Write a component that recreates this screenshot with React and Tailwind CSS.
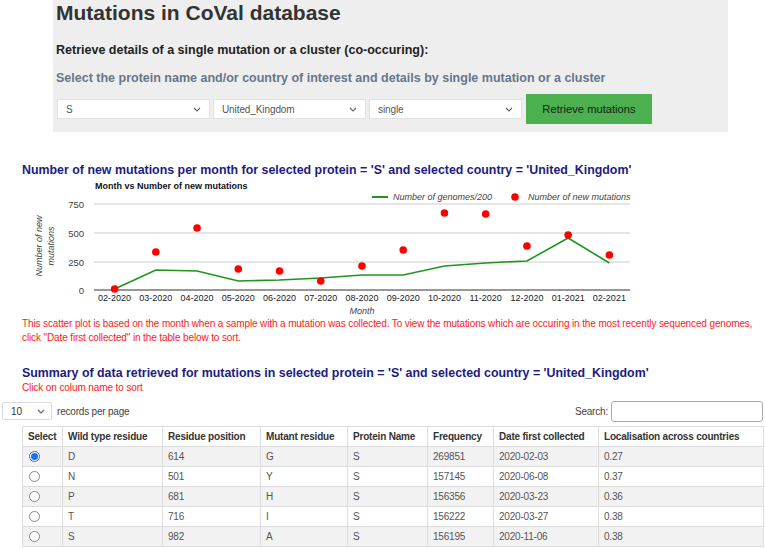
import React from 'react';

const months = ['02-2020', '03-2020', '04-2020', '05-2020', '06-2020', '07-2020', '08-2020', '09-2020', '10-2020', '11-2020', '12-2020', '01-2021', '02-2021'];
// pixel y (page coords) read off the reference
const redY = [289, 252, 228, 269, 271, 281, 266, 250, 213, 214, 246, 235, 255];
const greenY = [289, 270, 271, 281, 280, 278, 275, 275, 266, 263, 261, 238, 263];

const rows = [
  ['D', '614', 'G', 'S', '269851', '2020-02-03', '0.27'],
  ['N', '501', 'Y', 'S', '157145', '2020-06-08', '0.37'],
  ['P', '681', 'H', 'S', '156356', '2020-03-23', '0.36'],
  ['T', '716', 'I', 'S', '156222', '2020-03-27', '0.38'],
  ['S', '982', 'A', 'S', '156195', '2020-11-06', '0.38'],
];

const cols = [
  ['Select', 40],
  ['Wild type residue', 100],
  ['Residue position', 98],
  ['Mutant residue', 87],
  ['Protein Name', 80],
  ['Frequency', 66],
  ['Date first collected', 105],
  ['Localisation across countries', 165],
];

function Chevron() {
  return (
    <svg width="8" height="5" viewBox="0 0 8 5" className="shrink-0">
      <polyline points="1,1 4,4 7,1" fill="none" stroke="#666" strokeWidth="1.2" />
    </svg>
  );
}

function Select({ value, w }) {
  return (
    <div className={`flex items-center justify-between bg-white border border-[#e2e2e2] h-[20px] pl-[8px] pr-[8px] text-[10px] tracking-[-0.1px] text-[#555] ${w}`}>
      <span>{value}</span>
      <Chevron />
    </div>
  );
}

function Chart() {
  const top = 178;
  const x0 = 94;
  const x1 = 630;
  const step = (x1 - x0) / 13;
  const cx = (i) => x0 + step / 2 + i * step;
  const Y = (y) => y - top;
  return (
    <svg width="660" height="139" className="block" style={{ fontFamily: 'Liberation Sans, Arial, sans-serif' }}>
      <text x="95" y={Y(189)} fontSize="9" fontWeight="bold" fill="#111">Month vs Number of new mutations</text>
      {/* legend */}
      <line x1="372" y1={Y(197)} x2="388" y2={Y(197)} stroke="#1e961e" strokeWidth="2" />
      <text x="393" y={Y(200)} fontSize="9" fontStyle="italic" fill="#444">Number of genomes/200</text>
      <circle cx="515" cy={Y(197)} r="3.8" fill="#ff0000" />
      <text x="528" y={Y(200)} fontSize="9" fontStyle="italic" fill="#444">Number of new mutations</text>
      {/* grid */}
      {[[204, '750'], [233, '500'], [262, '250']].map(([y, l]) => (
        <g key={l}>
          <line x1={x0} y1={Y(y)} x2={x1} y2={Y(y)} stroke="#cccccc" strokeWidth="1" />
          <text x="84" y={Y(y + 3.5)} fontSize="9.5" fill="#444" textAnchor="end">{l}</text>
        </g>
      ))}
      <text x="84" y={Y(293.5)} fontSize="9.5" fill="#444" textAnchor="end">0</text>
      {/* y title */}
      <g transform={`translate(45 ${Y(246)}) rotate(-90)`}>
        <text x="0" y="-3" fontSize="9" fontStyle="italic" fill="#444" textAnchor="middle">Number of new</text>
        <text x="0" y="8.5" fontSize="9" fontStyle="italic" fill="#444" textAnchor="middle">mutations</text>
      </g>
      {/* line */}
      <polyline
        points={greenY.map((y, i) => `${cx(i)},${Y(y)}`).join(' ')}
        fill="none"
        stroke="#1e961e"
        strokeWidth="1.6"
      />
      <line x1={x0} y1={Y(290)} x2={x1} y2={Y(290)} stroke="#333" strokeWidth="1.2" />
      {redY.map((y, i) => (
        <circle key={i} cx={cx(i)} cy={Y(y)} r="3.8" fill="#ff0000" />
      ))}
      {months.map((m, i) => (
        <text key={m} x={cx(i)} y={Y(301)} fontSize="9" fill="#222" textAnchor="middle">{m}</text>
      ))}
      <text x={(x0 + x1) / 2} y={Y(314)} fontSize="9" fontStyle="italic" fill="#444" textAnchor="middle">Month</text>
    </svg>
  );
}

function Radio({ on }) {
  if (on) {
    return (
      <span className="flex items-center justify-center w-[11px] h-[11px] rounded-full border border-[#1a73e8] bg-white">
        <span className="w-[7px] h-[7px] rounded-full bg-[#1a73e8]" />
      </span>
    );
  }
  return <span className="block w-[11px] h-[11px] rounded-full border border-[#8a8a8a] bg-white" />;
}

export default function App() {
  return (
    <div className="w-[765px] h-[549px] overflow-hidden bg-white font-['Liberation_Sans',Arial,sans-serif]">
      {/* search panel */}
      <div className="ml-[53px] w-[675px] h-[132px] bg-[#eeeeee] pl-[3px]">
        <h1 className="pt-[1px] text-[21px] leading-[24px] font-bold text-[#333]">Mutations in CoVal database</h1>
        <p className="mt-[17px] text-[12.5px] leading-[16px] font-bold text-[#222]">
          Retrieve details of a single mutation or a cluster (co-occuring):
        </p>
        <p className="mt-[12px] text-[12.5px] leading-[16px] font-bold text-[#67768a]">
          Select the protein name and/or country of interest and details by single mutation or a cluster
        </p>
        <div className="mt-[8px] ml-[1px] flex items-center gap-[3px]">
          <Select value="S" w="w-[153px]" />
          <Select value="United_Kingdom" w="w-[153px]" />
          <Select value="single" w="w-[153px]" />
          <button className="ml-[1px] w-[126px] h-[30px] bg-[#4caf50] text-[11.2px] text-[#1a1a1a]">
            Retrieve mutations
          </button>
        </div>
      </div>

      {/* chart */}
      <div className="pl-[22px] mt-[30px]">
        <h2 className="text-[12.4px] leading-[16px] font-bold text-[#1c1c80] whitespace-nowrap">
          Number of new mutations per month for selected protein = 'S' and selected country = 'United_Kingdom'
        </h2>
      </div>
      <Chart />
      <p className="pl-[22px] text-[10px] leading-[14px] tracking-[-0.12px] text-[#ff2020] whitespace-nowrap">
        This scatter plot is based on the month when a sample with a mutation was collected. To view the mutations which are occuring in the most recently sequenced genomes,
        <br />
        click "Date first collected" in the table below to sort.
      </p>

      {/* summary */}
      <div className="pl-[22px] mt-[21px]">
        <h2 className="text-[12.4px] leading-[15px] font-bold text-[#1c1c80] whitespace-nowrap">
          Summary of data retrieved for mutations in selected protein = 'S' and selected country = 'United_Kingdom'
        </h2>
        <p className="text-[10px] leading-[14px] tracking-[-0.1px] text-[#ff2020]">Click on colum name to sort</p>
      </div>

      <div className="mt-[5px] flex items-center justify-between h-[22px] pl-[2px] pr-[2px]">
        <div className="flex items-center">
          <div className="flex items-center justify-between w-[50px] h-[18px] border border-[#ddd] rounded-[2px] pl-[8px] pr-[6px] text-[10px] text-[#333]">
            <span>10</span>
            <Chevron />
          </div>
          <span className="ml-[5px] text-[10px] tracking-[-0.2px] text-[#444]">records per page</span>
        </div>
        <div className="flex items-center">
          <span className="text-[10px] tracking-[-0.2px] text-[#444]">Search:</span>
          <div className="ml-[3px] w-[152px] h-[21px] border border-[#aaa] rounded-[3px] bg-white" />
        </div>
      </div>

      <table className="mt-[4px] ml-[22px] border-collapse table-fixed text-[10px] tracking-[-0.2px]">
        <colgroup>
          {cols.map(([c, w]) => (
            <col key={c} style={{ width: w }} />
          ))}
        </colgroup>
        <thead>
          <tr className="h-[20px]">
            {cols.map(([c]) => (
              <th key={c} className="border border-[#dddddd] px-[5px] text-left font-bold text-[#333] whitespace-nowrap">
                {c}
              </th>
            ))}
          </tr>
        </thead>
        <tbody>
          {rows.map((r, i) => (
            <tr key={i} className={`h-[20px] ${i % 2 === 0 ? 'bg-[#f2f2f2]' : 'bg-white'}`}>
              <td className="border border-[#dddddd] px-[5px]">
                <div className="flex items-center pl-[1px]">
                  <Radio on={i === 0} />
                </div>
              </td>
              {r.map((v, j) => (
                <td key={j} className="border border-[#dddddd] px-[5px] text-[#555] whitespace-nowrap">
                  {v}
                </td>
              ))}
            </tr>
          ))}
        </tbody>
      </table>
    </div>
  );
}
